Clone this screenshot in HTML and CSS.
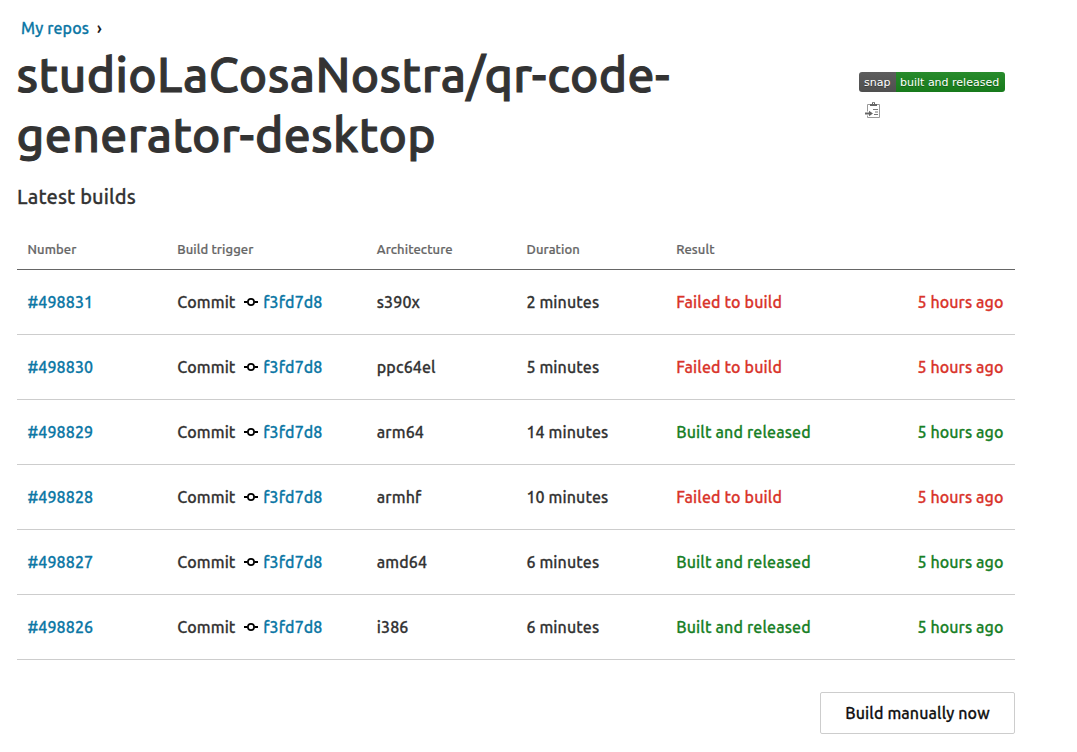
FILE: index.html
```html
<!DOCTYPE html>
<html lang="en">
<head>
<meta charset="utf-8">
<title>studioLaCosaNostra/qr-code-generator-desktop builds</title>
<link rel="stylesheet" href="styles.css">
</head>
<body>
<svg class="symbols" aria-hidden="true">
  <symbol id="commit" viewBox="0 0 14 10"><path d="M0 5h3.6M10.4 5H14" stroke="#000" stroke-width="2"/><circle cx="7" cy="5" r="3.1" fill="none" stroke="#000" stroke-width="1.7"/></symbol>
</svg>
<main class="page">
  <nav class="breadcrumbs"><a href="#">My repos</a><span class="chevron">›</span></nav>
  <header class="heading">
    <h1 class="title">studioLaCosaNostra/qr-code-<br>generator-desktop</h1>
    <div class="badge-area">
      <div class="badge"><span class="badge-label">snap</span><span class="badge-status">built and released</span></div>
      <svg class="copy" viewBox="0 0 16 17" width="16" height="17" fill="none" stroke="#999">
        <path d="M2.5 9.5V2.5H5M12 2.5h2.5v13h-12V13.500"/>
        <path d="M5 4V2h2V.3h3V2h2v2z" fill="#666" stroke="none"/>
        <path d="M8 1.500h1" stroke="#fff"/>
        <path d="M8 7.500h5M10 10h3M9 12.500h4" stroke="#777"/>
        <path d="M0 11.500h5" stroke="#666" stroke-width="2"/><path d="M4 8.800l4 2.700-4 2.700z" fill="#666" stroke="none"/>
      </svg>
    </div>
  </header>
  <h2 class="subtitle">Latest builds</h2>
  <table class="builds">
    <thead><tr><th class="narrow">Number</th><th class="wide">Build trigger</th><th class="narrow">Architecture</th><th class="narrow">Duration</th><th class="result">Result</th><th class="time"></th></tr></thead>
    <tbody>
      <tr><td><a href="#">#498831</a></td><td><span class="trigger"><span class="word">Commit</span><svg class="commit"><use href="#commit"/></svg><a href="#">f3fd7d8</a></span></td><td>s390x</td><td>2 minutes</td><td class="failed">Failed to build</td><td class="failed ago">5 hours ago</td></tr>
      <tr><td><a href="#">#498830</a></td><td><span class="trigger"><span class="word">Commit</span><svg class="commit"><use href="#commit"/></svg><a href="#">f3fd7d8</a></span></td><td>ppc64el</td><td>5 minutes</td><td class="failed">Failed to build</td><td class="failed ago">5 hours ago</td></tr>
      <tr><td><a href="#">#498829</a></td><td><span class="trigger"><span class="word">Commit</span><svg class="commit"><use href="#commit"/></svg><a href="#">f3fd7d8</a></span></td><td>arm64</td><td>14 minutes</td><td class="released">Built and released</td><td class="released ago">5 hours ago</td></tr>
      <tr><td><a href="#">#498828</a></td><td><span class="trigger"><span class="word">Commit</span><svg class="commit"><use href="#commit"/></svg><a href="#">f3fd7d8</a></span></td><td>armhf</td><td>10 minutes</td><td class="failed">Failed to build</td><td class="failed ago">5 hours ago</td></tr>
      <tr><td><a href="#">#498827</a></td><td><span class="trigger"><span class="word">Commit</span><svg class="commit"><use href="#commit"/></svg><a href="#">f3fd7d8</a></span></td><td>amd64</td><td>6 minutes</td><td class="released">Built and released</td><td class="released ago">5 hours ago</td></tr>
      <tr><td><a href="#">#498826</a></td><td><span class="trigger"><span class="word">Commit</span><svg class="commit"><use href="#commit"/></svg><a href="#">f3fd7d8</a></span></td><td>i386</td><td>6 minutes</td><td class="released">Built and released</td><td class="released ago">5 hours ago</td></tr>
    </tbody>
  </table>
  <div class="actions"><button class="build-button">Build manually now</button></div>
</main>
</body>
</html>
```
FILE: styles.css
```css
* { box-sizing: border-box; }
html, body { margin: 0; background: #fff; overflow: hidden; }
body { font: 500 16px/24px Ubuntu, "Noto Sans", sans-serif; color: #333; letter-spacing: 0.11px; -webkit-text-stroke: 0.26px currentColor; }
a { color: #0c77a5; text-decoration: none; }
.symbols { position: absolute; width: 0; height: 0; }
.page { width: 998px; margin-left: 17px; padding-top: 16px; }
.breadcrumbs { display: flex; height: 30px; padding-left: 4px; gap: 8px; }
.chevron { color: #111; }
.heading { display: flex; justify-content: space-between; height: 120px; }
.title { margin: -2px 0 0 -0.5px; font-size: 48px; line-height: 60px; font-weight: 500; letter-spacing: 0.4px; -webkit-text-stroke-width: 1px; white-space: nowrap; }
.badge-area { width: 156px; padding-top: 26px; }
.badge { display: flex; width: 146px; height: 20px; border-radius: 3px; overflow: hidden; font: 11px/21px "DejaVu Sans", sans-serif; letter-spacing: 0; -webkit-text-stroke: 0; color: #fff; text-shadow: 0 1px 0 rgba(1,1,1,.3); white-space: nowrap; }
.badge-label { width: 37px; padding-left: 5px; background: linear-gradient(#5d5d5d, #4f4f4f); }
.badge-status { flex: 1; padding-left: 4px; background: linear-gradient(#288b2c, #177a1b); }
.copy { display: block; margin: 10px 0 0 6px; }
.subtitle { margin: 15px 0 0; font-size: 20px; line-height: 32px; font-weight: 500; letter-spacing: 0.12px; }
.builds { width: 100%; margin-top: 17px; table-layout: fixed; border-collapse: separate; border-spacing: 0; }
.builds th { height: 40px; padding: 0 10.5px 2px; border-bottom: 1px solid #666; color: #666; font-size: 13px; line-height: 20px; font-weight: 500; letter-spacing: 0.1px; text-align: left; -webkit-text-stroke-width: 0.22px; }
.builds td { height: 65px; padding: 0 11.5px 0 10.5px; border-bottom: 1px solid #cdcdcd; white-space: nowrap; }
.narrow { width: 15%; }
.wide { width: 20%; }
.result { width: 20%; }
.time { width: 15%; }
.trigger { display: flex; align-items: center; }
.word { width: 67px; }
.commit { width: 14px; height: 10px; margin-right: 5px; }
.builds .failed { color: #d9342b; letter-spacing: 0.14px; }
.builds .released { color: #188026; letter-spacing: 0.14px; }
.builds .ago { text-align: right; letter-spacing: 0.08px; }
.actions { display: flex; justify-content: flex-end; padding-top: 32px; }
.build-button { width: 195px; height: 42px; padding: 0; border: 1px solid #cdcdcd; border-radius: 2px; background: #fff; color: #111; font: inherit; letter-spacing: 0.12px; }
```
